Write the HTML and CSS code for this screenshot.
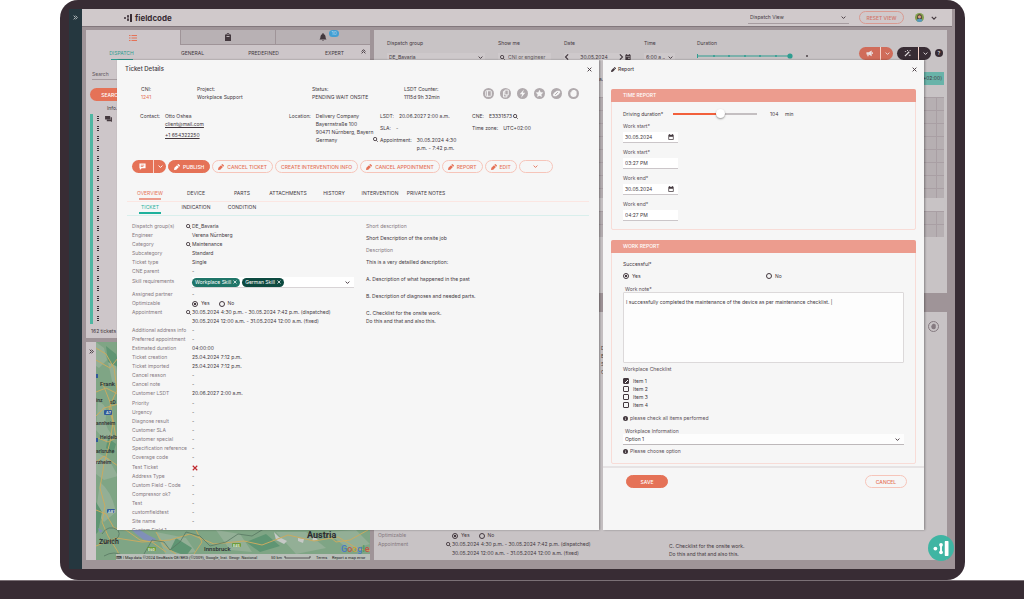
FILE: index.html
```html
<!DOCTYPE html>
<html lang="en">
<head>
<meta charset="utf-8">
<title>fieldcode – Ticket Details</title>
<link rel="stylesheet" href="styles.css">
</head>
<body>
<svg class="sprite" aria-hidden="true">
  <symbol id="pencil" viewBox="0 0 16 16"><path d="M0 16l1-6 7-7 5 5-7 7zM9 2l1.500-1.500q1-.8 2 0l3 3q.8 1 0 2L14 7z"/></symbol>
  <symbol id="lens" viewBox="0 0 16 16"><path fill="none" stroke="currentColor" stroke-width="2.800" d="M10.500 10.500L15 15M12 6.500a5.300 5.300 0 1 1-10.600 0 5.300 5.300 0 0 1 10.600 0z"/></symbol>
  <symbol id="chev" viewBox="0 0 16 16"><path fill="none" stroke="currentColor" stroke-width="3" d="M2 5l6 6 6-6"/></symbol>
  <symbol id="left" viewBox="0 0 16 16"><path fill="none" stroke="currentColor" stroke-width="3" d="M11 1L4 8l7 7"/></symbol>
  <symbol id="right" viewBox="0 0 16 16"><path fill="none" stroke="currentColor" stroke-width="3" d="M5 1l7 7-7 7"/></symbol>
  <symbol id="dbl" viewBox="0 0 16 16"><path fill="none" stroke="currentColor" stroke-width="3" d="M2 2l6 6-6 6M8 2l6 6-6 6"/></symbol>
  <symbol id="cross" viewBox="0 0 16 16"><path fill="none" stroke="currentColor" stroke-width="3" d="M2 2l12 12M14 2L2 14"/></symbol>
  <symbol id="cal" viewBox="0 0 16 16"><path fill-rule="evenodd" d="M1 2h2V0h2v2h6V0h2v2h2v13H1zM3 7v6h10V7z"/></symbol>
  <symbol id="calfull" viewBox="0 0 16 16"><path fill-rule="evenodd" d="M1 2h2V0h2v2h6V0h2v2h2v14H1zM3 6v1h10V6zM9 10v3h3v-3z"/></symbol>
  <symbol id="info" viewBox="0 0 16 16"><path fill-rule="evenodd" d="M8 0a8 8 0 1 1 0 16A8 8 0 0 1 8 0zM7 3v2h2V3zM7 7v6h2V7z"/></symbol>
  <symbol id="logo" viewBox="0 0 24 24"><circle cx="3" cy="12" r="3"/><circle cx="12" cy="6" r="3"/><circle cx="12" cy="18" r="3"/><path d="M10.500 6h3v12h-3zM18 2a3 3 0 0 1 6 0v20a3 3 0 0 1-6 0z"/></symbol>
  <symbol id="hand" viewBox="0 0 16 16"><path d="M4 9V6h1.500V4H7V3h3v1h1.500v1H12v5q-.5 3-4 3t-4-4z"/></symbol>
</svg>

<div class="laptop">
  <div class="screen">
    <nav class="rail" aria-label="Main"><button class="bare" aria-label="Expand menu"><svg class="i5"><use href="#dbl"/></svg></button></nav>
    <div class="app">
      <header class="bar">
        <div class="brand"><svg class="i8"><use href="#logo"/></svg>fieldcode</div>
        <label class="view"><select aria-label="View"><option>Dispatch View</option></select><svg class="i5"><use href="#chev"/></svg></label>
        <button class="btn reset">RESET VIEW</button>
        <svg class="avatar" viewBox="0 0 20 20"><circle cx="10" cy="10" r="10" fill="#83a04e"/><path d="M5 9q0-6 5-6t5 6v5H5z" fill="#4b3630"/><circle cx="10" cy="8.500" r="3.500" fill="#d9a286"/><path d="M3 17q2-5 7-5t7 5q-7 6-14 0z" fill="#5699bd"/></svg>
        <svg class="i6"><use href="#chev"/></svg>
      </header>

      <div class="cols">
        <div class="side">
          <section class="panel queue">
            <div class="icontabs">
              <button class="on" aria-label="Tickets"><svg viewBox="0 0 16 14"><path fill="none" stroke="currentColor" stroke-width="2" d="M0 2h3M5 2h11M0 7h3M5 7h11M0 12h3M5 12h11"/></svg></button>
              <button aria-label="Clipboard"><svg viewBox="0 0 16 16"><path fill-rule="evenodd" d="M2 3h3q0-3 3-3t3 3h3v13H2zM5 6v2h6V6zM7 2v2h2V2z"/></svg></button>
              <button aria-label="Alerts"><svg viewBox="0 0 16 16"><path d="M1 13q2-2 2-6 0-4 4-5V0h2v2q4 1 4 5 0 4 2 6zM6 14h4q-2 3-4 0z"/></svg><span class="count">10</span></button>
            </div>
            <div class="subtabs"><button class="on">DISPATCH</button><button>GENERAL</button><button>PREDEFINED</button><button>EXPERT</button><svg class="i5 up"><use href="#dbl"/></svg></div>
            <input class="search" placeholder="Search" aria-label="Search">
            <button class="btn full searchbtn">SEARCH</button>
            <div class="infohead">Info.</div>
            <ul class="rows">
              <li><svg class="chat" viewBox="0 0 16 14"><path d="M0 0h12v8H0zM4 9h9V3h3v11l-3-2H4z"/></svg></li><li></li><li></li><li></li><li></li><li></li><li></li><li></li><li></li><li></li><li></li><li></li><li></li><li></li><li></li><li></li><li></li><li></li><li></li><li></li><li></li>
            </ul>
            <div class="total">162 tickets</div>
          </section>
          <section class="mapbox">
            <button class="bare strip" aria-label="Expand map"><svg class="i5"><use href="#dbl"/></svg></button>
            <svg class="map" viewBox="0 0 274 218" preserveAspectRatio="xMinYMax slice">
              <rect width="274" height="218" fill="#7fa585"/>
              <g fill="#93af96"><path d="M0 0l8 6 3 12-8 8-3-2zM12 20l8 4 4 20-8-5zM2 60q10 2 8 14t8 20l-8 6-10-12zM0 110l12 6 10 18-14 4-8-6zM4 140q12 10 16 30l-12 10-8-10z"/><path d="M60 190l30 6 10 14-30 4zM120 188l24 4 12 18-22-2zM180 190l30 0 20 16-30 6zM230 190l30-2 14 14-20 6z"/></g>
              <g fill="#5f9573"><path d="M10 4l10 8 4 14-12-6zM0 160l6 10-4 20-2 2zM80 196l16 10-6 8-16-6zM150 200l20-8 14 12-20 6zM12 96l8 6-3 10-7-6z"/></g>
              <path fill="#8090b8" d="M34 186l10 2 8 5 8 4-2 3-10-2-8-6zM2 186l5 3-3 2z"/>
              <path fill="#c6c9c6" d="M178 190l5 5 8 4-3 3-8-4zM202 196l6 1-1 4-5-2zM218 194l4 4-6 1z"/>
              <g fill="none" stroke="#c9ab61" stroke-width="1"><path d="M0 6l10 6 8 14 3 22-8 18 4 14-3 20-6 22-4 24 5 18-3 16 6 14 10 16 4 18"/><path d="M0 50l10-4 12 6M0 74l8-8 14-4M2 96l10 4 10-5M0 120l8-6 14 10M6 40l8 20 6 36M0 18l14 8 8-10M0 168l10 4 8 14 12 2 14 10 12 2 14 10M0 204l20-8 26 4 28-2 20-6 24 10 30-3 18 4 26-10 26 6 24-4 20 12 22 3M60 190l8 14 12 8M100 188l6 12-8 12M228 190l12 10 14-2 18-10"/></g>
              <g fill="none" stroke="#587762" stroke-width=".8"><path d="M6 192q6-10 16-4 4 8-6 10-8 6-12-2M48 212l8-14 12 2 6 8 10-8 6-10 14 4 10 10 16-4 12-8 14 2 20-12 16 4M8 214q10-6 20 0t20 0"/></g>
              <g class="ml"><text x="4" y="44" class="m6">Frank</text><text x="0" y="60">inz</text><text x="14" y="62">sD</text><text x="0" y="83">annheim</text><text x="4" y="97">Heidelb</text><text x="0" y="111">arlsruhe</text><text x="0" y="122">rzheim</text><text x="3" y="202" class="m7">Zürich</text><text x="108" y="209" class="m6">Innsbruck</text><text x="211" y="196" class="m8">Austria</text></g>
              <g fill="#31599a"><rect x="8" y="68" width="8" height="5" rx="1"/><rect x="11" y="167" width="8" height="4" rx="1"/><rect y="32" width="2" height="4"/><rect y="96" width="2" height="4"/></g>
              <g fill="#6c9c3c"><rect x="51" y="205" width="9" height="4" rx="1"/><rect x="136" y="201" width="9" height="4" rx="1"/></g>
              <g class="road"><text x="10" y="72">A7</text><text x="12" y="171">A81</text><text x="52" y="209">E60</text><text x="137" y="205">E45</text></g>
              <g class="goog"><text x="245" y="210"><tspan fill="#4b79c4">G</tspan><tspan fill="#c2554a">o</tspan><tspan fill="#c9a13e">o</tspan><tspan fill="#4b79c4">g</tspan><tspan fill="#4f9a5c">l</tspan><tspan fill="#c2554a">e</tspan></text></g>
              <path fill="#b9bfb9" d="M20 212h254v6H20z"/>
              <g class="attr"><text x="20" y="217">⌨ | Map data ©2024 GeoBasis-DE/BKG (©2009), Google, Inst. Geogr. Nacional</text><text x="175" y="217">50 km</text><text x="220" y="217">Terms</text><text x="236" y="217">Report a map error</text></g>
              <path fill="none" stroke="#3d3a3c" stroke-width=".8" d="M189 214v2h25v-2"/>
            </svg>
          </section>
        </div>

        <div class="work">
          <section class="panel board">
            <div class="filters">
              <label class="f wide">Dispatch group<span class="box"><input value="DE_Bavaria"><svg class="i5"><use href="#chev"/></svg></span></label>
              <label class="f mid">Show me<span class="box"><svg class="i5"><use href="#lens"/></svg><input placeholder="CNI or engineer"></span></label>
              <label class="f date">Date<span class="box"><svg class="i6"><use href="#left"/></svg><input value="30.05.2024"><svg class="i6"><use href="#right"/></svg><svg class="i6"><use href="#calfull"/></svg></span></label>
              <label class="f time">Time<span class="box"><input value="6:00 a ..."><svg class="i5"><use href="#chev"/></svg></span></label>
              <div class="f dur">Duration<svg viewBox="0 0 112 6"><path stroke="#2f9d90" d="M0 3h94M.5 1v4"/><g fill="#2f9d90"><circle cx="17" cy="3" r="1"/><circle cx="32" cy="3" r="1"/><circle cx="48" cy="3" r="1"/><circle cx="63" cy="3" r="1"/><circle cx="79" cy="3" r="1"/><circle cx="93" cy="3" r="2.600"/></g><circle cx="110" cy="3" r="1" fill="#4a4045"/></svg></div>
              <div class="acts">
                <span class="split coral"><button aria-label="Announce"><svg viewBox="0 0 16 16"><path d="M1 5h5l7-4v13L6 10v4H3v-4H1zM14 5h2v4h-2z"/></svg></button><button aria-label="More announce options"><svg class="i5"><use href="#chev"/></svg></button></span>
                <span class="split dark"><button aria-label="Auto plan"><svg viewBox="0 0 16 16"><path d="M1 13L11 3l2 2L3 15zM2 2h3v2H2zM11 11h4v2h-4zM7 0h2v2H7zM13 0h2v2h-2z"/></svg></button><button aria-label="More plan options"><svg class="i5"><use href="#chev"/></svg></button></span>
                <button class="help" aria-label="Help">?</button>
              </div>
            </div>
            <div class="zone"><span>a.m.</span><span class="utc">(UTC+02:00)</span></div>
            <div class="slots"><div class="grid tall"></div><div class="grid short"></div></div>
          </section>
          <section class="panel detail">
            <svg class="i11 stop"><use href="#hand"/></svg>
            <div class="peek"><span>D</span><span>B</span><span>S</span><span>C</span></div>
            <div class="foot">
              <dl>
                <dt>Optimizable</dt><dd><label class="opt"><input type="radio" name="o2" checked>Yes</label><label class="opt"><input type="radio" name="o2">No</label></dd>
                <dt>Appointment</dt><dd class="two"><svg class="i5"><use href="#lens"/></svg>30.05.2024 4:30 p.m. - 30.05.2024 7:42 p.m. (dispatched)<br>30.05.2024 12:00 a.m. - 31.05.2024 12:00 a.m. (fixed)</dd>
              </dl>
              <p>C. Checklist for the onsite work.<br>Do this and that and also this.</p>
            </div>
          </section>
        </div>
      </div>
    </div>

    <div class="overlay">
      <section class="dialog ticket" role="dialog" aria-label="Ticket Details">
        <header class="title"><h2>Ticket Details</h2><button class="bare" aria-label="Close ticket"><svg class="i5"><use href="#cross"/></svg></button></header>
        <div class="facts">
          <div>CNI:<br><a href="#" class="hot">1241</a></div>
          <div>Project:<br>Workplace Support</div>
          <div>Status:<br>PENDING WAIT ONSITE</div>
          <div>LSDT Counter:<br>1115d 9h 32min</div>
          <div class="badges">
            <svg viewBox="0 0 16 16"><rect x="4" y="4" width="8" height="8" rx="1"/><path d="M6.500 4v8"/></svg>
            <svg viewBox="0 0 16 16"><path d="M7 3h5v7H7zM7 5H5v8h5v-3"/></svg>
            <svg viewBox="0 0 16 16"><path fill="#f6f6f6" stroke="none" d="M10 2L4 9h3.500L6 14l6-7H8.500z"/></svg>
            <svg viewBox="0 0 16 16"><path fill="#f6f6f6" stroke="none" d="M8 2.500l1.700 3.600 3.900.5-2.900 2.700.8 3.900L8 11.300l-3.500 1.900.8-3.900L2.400 6.600l3.900-.5z"/></svg>
            <svg viewBox="0 0 16 16"><path fill="#f6f6f6" stroke="none" d="M2.500 10l2-3 4-3h4l1 2-2 3-4 3H4z"/><path stroke="#b0aaad" d="M6 10l4-4"/></svg>
            <svg viewBox="0 0 16 16"><path fill="#f6f6f6" stroke="none" d="M3.500 9V6H5V4h1.500V3h4v1H12v1h.5v5q-.5 3-4.500 3t-4.500-4z"/></svg>
          </div>
        </div>
        <div class="contact">
          <div class="pair"><span>Contact:</span><div class="links">Otto Oshea<br><a href="#">client@mail.com</a><a href="#" class="tel">+1 654322250</a></div></div>
          <div class="pair"><span>Location:</span><div>Delivery Company<br>Bayernstraße 100<br>90471 Nürnberg, Bayern<br>Germany</div></div>
          <div class="stack"><div class="pair ind"><span>LSDT:</span><div>20.06.2027 2:00 a.m.</div></div><div class="pair ind"><span>SLA:</span><div>-</div></div><div class="pair"><svg class="i5"><use href="#lens"/></svg><span>Appointment:</span><div>30.05.2024 4:30<br>p.m. - 7:42 p.m.</div></div></div>
          <div class="stack"><div class="pair"><span>CNE:</span><div>E3331573 <svg class="i5"><use href="#lens"/></svg></div></div><div class="pair"><span>Time zone:</span><div>UTC+02:00</div></div></div>
        </div>
        <div class="actions">
          <span class="split coral"><button aria-label="Comment"><svg viewBox="0 0 16 16"><path fill-rule="evenodd" d="M1 1h14v11H6l-4 4v-4H1zM4 4v1.500h8V4zM4 7.500V9h6V7.500z"/></svg></button><button aria-label="More comment options"><svg class="i5"><use href="#chev"/></svg></button></span>
          <button class="btn full"><svg class="i6"><use href="#pencil"/></svg>PUBLISH</button>
          <button class="btn"><svg class="i6"><use href="#pencil"/></svg>CANCEL TICKET</button>
          <button class="btn">CREATE INTERVENTION INFO</button>
          <button class="btn"><svg class="i6"><use href="#pencil"/></svg>CANCEL APPOINTMENT</button>
          <button class="btn"><svg class="i6"><use href="#pencil"/></svg>REPORT</button>
          <button class="btn"><svg class="i6"><use href="#pencil"/></svg>EDIT</button>
          <button class="btn more" aria-label="More actions"><svg class="i5"><use href="#chev"/></svg></button>
        </div>
        <div class="tabs main"><button class="on">OVERVIEW</button><button>DEVICE</button><button>PARTS</button><button>ATTACHMENTS</button><button>HISTORY</button><button>INTERVENTION</button><button>PRIVATE NOTES</button></div>
        <div class="tabs sub"><button class="on">TICKET</button><button>INDICATION</button><button>CONDITION</button></div>
        <div class="body">
          <div class="fields">
            <dl>
              <dt>Dispatch group(s)</dt><dd><svg class="i5"><use href="#lens"/></svg>DE_Bavaria</dd>
              <dt>Engineer</dt><dd>Verena Nürnberg</dd>
              <dt>Category</dt><dd><svg class="i5"><use href="#lens"/></svg>Maintenance</dd>
              <dt>Subcategory</dt><dd>Standard</dd>
              <dt>Ticket type</dt><dd>Single</dd>
              <dt>CNE parent</dt><dd>-</dd>
            </dl>
            <dl class="skills">
              <dt>Skill requirements</dt><dd class="picker"><span class="chip">Workplace Skill <svg><use href="#cross"/></svg></span><span class="chip deep">German Skill <svg><use href="#cross"/></svg></span><svg class="i5 end"><use href="#chev"/></svg></dd>
            </dl>
            <dl>
              <dt>Assigned partner</dt><dd>-</dd>
              <dt>Optimizable</dt><dd><label class="opt"><input type="radio" name="o1" checked>Yes</label><label class="opt"><input type="radio" name="o1">No</label></dd>
              <dt>Appointment</dt><dd class="two"><svg class="i5"><use href="#lens"/></svg>30.05.2024 4:30 p.m. - 30.05.2024 7:42 p.m. (dispatched)<br>30.05.2024 12:00 a.m. - 31.05.2024 12:00 a.m. (fixed)</dd>
              <dt>Additional address info</dt><dd>-</dd>
              <dt>Preferred appointment</dt><dd>-</dd>
              <dt>Estimated duration</dt><dd>04:00:00</dd>
              <dt>Ticket creation</dt><dd>25.04.2024 7:12 p.m.</dd>
              <dt>Ticket imported</dt><dd>25.04.2024 7:12 p.m.</dd>
              <dt>Cancel reason</dt><dd>-</dd>
              <dt>Cancel note</dt><dd>-</dd>
              <dt>Customer LSDT</dt><dd>20.06.2027 2:00 a.m.</dd>
            </dl>
            <dl>
              <dt>Priority</dt><dd>-</dd>
              <dt>Urgency</dt><dd>-</dd>
              <dt>Diagnose result</dt><dd>-</dd>
              <dt>Customer SLA</dt><dd>-</dd>
              <dt>Customer special</dt><dd>-</dd>
              <dt>Specification reference</dt><dd>-</dd>
              <dt>Coverage code</dt><dd>-</dd>
            </dl>
            <dl>
              <dt>Test Ticket</dt><dd class="no"><svg aria-label="No"><use href="#cross"/></svg></dd>
              <dt>Address Type</dt><dd>-</dd>
              <dt>Custom Field - Code</dt><dd>-</dd>
              <dt>Compressor ok?</dt><dd>-</dd>
              <dt>Test</dt><dd>-</dd>
              <dt>customfieldtest</dt><dd>-</dd>
              <dt>Site name</dt><dd>-</dd>
              <dt>Custom Field 1</dt><dd>-</dd>
            </dl>
          </div>
          <div class="desc">
            <h3>Short description</h3>
            <p>Short Description of the onsite job</p>
            <h3>Description</h3>
            <p>This is a very detailled description:</p>
            <p>A. Description of what happened in the past</p>
            <p>B. Description of diagnoses and needed parts.</p>
            <p>C. Checklist for the onsite work.<br>Do this and that and also this.</p>
          </div>
        </div>
      </section>

      <form class="dialog report" aria-label="Report">
        <header class="title"><h2><svg class="i5"><use href="#pencil"/></svg>Report</h2><button type="button" class="bare" aria-label="Close report"><svg class="i5"><use href="#cross"/></svg></button></header>
        <section class="card">
          <h3>TIME REPORT</h3>
          <div class="inner">
            <div class="drive"><label for="drv">Driving duration*</label><input id="drv" type="range" min="0" max="180" value="104"><output for="drv">104</output><span>min</span></div>
            <label class="stamp">Work start*<span><input value="30.05.2024"><svg class="i6"><use href="#cal"/></svg></span></label>
            <label class="stamp">Work start*<span><input value="03:27 PM"></span></label>
            <label class="stamp">Work end*<span><input value="30.05.2024"><svg class="i6"><use href="#cal"/></svg></span></label>
            <label class="stamp">Work end*<span><input value="04:27 PM"></span></label>
          </div>
        </section>
        <section class="card">
          <h3>WORK REPORT</h3>
          <div class="inner">
            <div class="strong">Successful*</div>
            <div class="yesno"><label class="opt"><input type="radio" name="ok" checked>Yes</label><label class="opt"><input type="radio" name="ok">No</label></div>
            <label class="note" for="note">Work note*</label>
            <textarea id="note">I successfully completed the maintenance of the device as per maintenance checklist. |</textarea>
            <fieldset><legend>Workplace Checklist</legend>
              <label><input type="checkbox" checked>Item 1</label><label><input type="checkbox">Item 2</label><label><input type="checkbox">Item 3</label><label><input type="checkbox">Item 4</label>
            </fieldset>
            <p class="hint"><svg class="i5"><use href="#info"/></svg>please check all items performed</p>
            <label class="note" for="wi">Workplace Information</label>
            <div class="select"><select id="wi"><option>Option 1</option></select><svg class="i5"><use href="#chev"/></svg></div>
            <p class="hint"><svg class="i5"><use href="#info"/></svg>Please choose option</p>
          </div>
        </section>
        <footer><button type="button" class="btn full">SAVE</button><button type="button" class="btn">CANCEL</button></footer>
      </form>
    </div>
    <button class="fab" aria-label="Open assistant"><svg><use href="#logo"/></svg></button>
  </div>
</div>
<div class="base"></div>
</body>
</html>
```

FILE: styles.css
```css
* { box-sizing: border-box; margin: 0; padding: 0; }
:root {
  --ink: #43383e;
  --soft: #85797f;
  --coral: #e57257;
  --teal: #3fb5a3;
  --shell: #382c34;
}
body { min-height: 100vh; display: flex; flex-direction: column; background: #fff; color: var(--ink); font: 5px/8px Inter, "Open Sans", sans-serif; overflow: hidden; }
button, input, select, textarea { font: inherit; color: inherit; border: 0; background: none; min-width: 0; }
input::placeholder { color: inherit; opacity: .8; }
input, select, textarea { outline: 0; appearance: none; }
a { color: inherit; }
ul { list-style: none; }
svg { fill: currentColor; flex: none; }
.sprite { position: absolute; width: 0; height: 0; }
.i5 { width: 5px; height: 5px; }
.i6 { width: 6px; height: 6px; }
.i8 { width: 8px; height: 8px; }
.i11 { width: 11px; height: 11px; }
.bare { display: flex; align-items: center; justify-content: center; }

.laptop { flex: 1; margin: 0 59px 0 60px; padding: 9px 10px 11px 9px; background: var(--shell); border-radius: 18px; display: flex; }
.base { height: 19px; background: var(--shell); border-top: 1px solid #7b7177; }
.screen { position: relative; flex: 1; display: flex; background: #9f9498; }
.rail { width: 13px; padding-top: 6px; background: #25373f; color: #b9bec0; display: flex; justify-content: center; align-items: flex-start; }
.app { flex: 1; display: flex; flex-direction: column; min-width: 0; }

.bar { height: 18px; margin-right: 3px; padding: 0 15px 0 42px; background: #d0c9cb; border-bottom: 1px solid #82777c; display: flex; align-items: center; }
.brand { display: flex; align-items: center; gap: 3px; font: 700 8px/10px Inter, sans-serif; color: #382c34; margin-right: auto; }
.view { display: flex; align-items: center; width: 101px; height: 12px; padding: 0 3px 0 2px; border-bottom: 1px solid #a69ca0; margin-right: 10px; }
.view select { flex: 1; }
.btn { display: flex; align-items: center; justify-content: center; gap: 3px; height: 13px; padding: 0 5px; border: 1px solid #f6c5ba; border-radius: 7px; color: var(--coral); font-weight: 500; white-space: nowrap; }
.btn.full { background: var(--coral); border-color: var(--coral); color: #fff; }
.reset { width: 45px; border-color: #d99a91; color: #d2756a; margin-right: 11px; }
.avatar { width: 9px; height: 9px; margin-right: 7px; }

.cols { flex: 1; display: flex; gap: 4px; padding: 3px 8px 9px 4px; }
.side { width: 284px; display: flex; flex-direction: column; gap: 4px; }
.panel { background: #c8c3c5; }
.queue { height: 308px; background: #cdc6c9; display: flex; flex-direction: column; }
.icontabs { display: flex; height: 16px; }
.icontabs button { flex: 1; display: flex; align-items: center; justify-content: center; background: #b8b1b4; border-left: 1px solid #9f9498; border-bottom: 1px solid #9f9498; }
.icontabs .on { background: none; border: 0; color: var(--coral); }
.icontabs svg { width: 8px; height: 8px; }
.count { width: 10px; height: 7px; margin: -8px -12px 0 2px; border-radius: 4px; background: #439fd3; color: #b9dcee; line-height: 7px; }
.subtabs { height: 16px; display: flex; align-items: center; }
.subtabs button { flex: 1; height: 14px; }
.subtabs .on { color: #2f9d90; background: linear-gradient(#2f9d90, #2f9d90) center bottom / 22px 1px no-repeat; }
.up { transform: rotate(-90deg); margin: 0 4px 4px -9px; }
.search { height: 12px; margin: 8px 6px; border-bottom: 1px solid #a69ca0; }
.searchbtn { width: 43px; margin-left: 4px; color: #eadfe0; background: #d06c5a; border: 0; }
.infohead { padding: 4px 0 2px 21px; line-height: 7px; }
.rows { border-left: 3px solid #4fb6a2; margin-left: 4px; }
.rows li { height: 10px; padding-left: 4px; display: flex; align-items: center; gap: 6px; }
.rows li::before { content: ""; width: 2px; height: 5px; background: repeating-linear-gradient(#382c34 0 1px, transparent 1px 2px); }
.chat { width: 7px; height: 6px; }
.total { margin-left: 5px; line-height: 14px; }
.mapbox { flex: 1; display: flex; min-height: 0; background: #cdc6c9; }
.strip { width: 10px; align-items: flex-start; padding-top: 7px; }
.map { flex: 1; min-width: 0; height: 100%; }
.ml { font: 500 5px Roboto, sans-serif; fill: #2c2b30; }
.m6 { font-size: 6px; }
.m7 { font-size: 7px; }
.m8 { font-size: 9px; font-weight: 700; }
.road { font: 700 4px Roboto, sans-serif; fill: #dfe6dc; }
.goog { font: 500 9px Roboto, sans-serif; }
.attr { font: 4px Roboto, sans-serif; fill: #222; }

.work { flex: 1; min-width: 0; display: flex; flex-direction: column; gap: 19px; }
.board { height: 263px; }
.filters { display: flex; padding: 9px 4px 0 13px; height: 30px; }
.f { display: flex; flex-direction: column; gap: 6px; margin-right: 13px; }
.box { display: flex; align-items: center; gap: 3px; height: 9px; padding: 0 2px; background: #cec9cb; }
.box input { flex: 1; width: 10px; }
.wide { width: 98px; }
.mid { width: 53px; }
.date { width: 67px; }
.date input { text-align: center; }
.date .box { padding: 0; gap: 1px; }
.time { width: 31px; margin-right: 22px; }
.dur svg { width: 112px; height: 6px; }
.acts { margin: 8px 0 0 auto; display: flex; gap: 4px; align-items: flex-start; }
.split { display: flex; width: 34px; height: 13px; border-radius: 7px; overflow: hidden; color: #fff; background: var(--coral); }
.split button { display: flex; align-items: center; justify-content: center; width: 12px; }
.split button:first-child { flex: 1; border-right: 1px solid #f8d3ca; }
.split button:first-child svg { width: 7px; height: 7px; }
.split.dark { background: #382c34; color: #e2dcde; }
.acts .coral { background: #d06c5a; color: #eadfe0; }
.help { width: 8px; height: 8px; margin-top: 2px; border-radius: 4px; background: #382c34; color: #d0c9cb; font-weight: 700; }
.zone { margin: 12px 3px 0 225px; height: 13px; display: flex; justify-content: space-between; align-items: center; }
.utc { padding: 2px 2px 3px 40px; background: #69b3a9; }
.slots { margin: 12px 3px 0; display: flex; flex-direction: column; gap: 13px; }
.grid { background: repeating-linear-gradient(90deg, #a99fa4 0 1px, transparent 1px 13px), repeating-linear-gradient(#a99fa4 0 1px, #b6afb2 1px 13px); }
.tall { height: 101px; }
.short { height: 26px; }
.detail { flex: 1; display: flex; flex-direction: column; }
.stop { align-self: flex-end; margin: 9px 8px 12px; color: #857a80; border: 1px solid; border-radius: 6px; }
.peek { padding-left: 227px; display: flex; flex-direction: column; }
.foot { margin-top: auto; padding: 0 4px 2px; display: grid; grid-template-columns: 291px 1fr; align-items: end; }
.foot dl { grid-template-columns: 74px 1fr; }

.overlay { position: absolute; inset: 51px 31px 39px 48px; display: flex; gap: 4px; }
.dialog { background: #f6f6f6; overflow: hidden; min-width: 0; box-shadow: 1px 0 2px #0005; }
.ticket { flex: 482; }
.report { flex: 321; display: flex; flex-direction: column; }
.title { display: flex; justify-content: space-between; align-items: center; height: 18px; padding: 0 7px 0 8px; }
.title h2 { display: flex; align-items: center; gap: 2px; font: 500 6px/8px Inter, sans-serif; }
.report h2 { font-size: 5px; }
.facts { display: grid; grid-template-columns: 56px 115px 92px 79px 1fr; padding: 7px 14px 0 24px; }
.hot { color: var(--coral); text-decoration: none; }
.badges { display: flex; gap: 6px; align-self: center; }
.badges svg { width: 11px; height: 11px; border-radius: 6px; background: #b0aaad; fill: none; stroke: #f6f6f6; stroke-width: 1.4; }
.contact { display: grid; grid-template-columns: 149px 84px 99px 1fr; padding: 11px 0 0 23px; height: 58px; }
.pair { display: flex; gap: 5px; white-space: nowrap; }
.pair > svg { margin: 1px -3px 0 0; }
.pair div svg { vertical-align: -1px; }
.ind { padding-left: 7px; }
.links a { display: block; }
.tel { margin-top: 3px; }
.stack { display: flex; flex-direction: column; gap: 4px; }
.actions { display: flex; gap: 2px; padding: 0 0 0 15px; margin-top: 1px; }
.actions .more { width: 34px; }
.tabs { display: flex; margin: 0 10px; border-bottom: 1px solid #fbe6e2; }
.tabs button { width: 46px; display: flex; justify-content: center; white-space: nowrap; }
.main { margin-top: 15px; }
.main button, .sub button { padding: 1px 0 3px; border-bottom: 1px solid transparent; }
.main .on { color: var(--coral); background: linear-gradient(#ec9c8e, #ec9c8e) center bottom / 22px 2px no-repeat; }
.sub { border-color: #d9efec; }
.sub .on { color: #1fb19c; background: linear-gradient(#1fb19c, #1fb19c) center bottom / 22px 2px no-repeat; }
.body { display: grid; grid-template-columns: 222px 1fr; gap: 12px; padding: 6px 0 0 15px; }
dl { display: grid; grid-template-columns: 60px 1fr; line-height: 9px; }
dt { color: var(--soft); white-space: nowrap; }
dd { display: flex; align-items: center; white-space: nowrap; }
dd > .i5:first-child { margin: 0 1px 0 -6px; }
.two { display: block; line-height: 9px; }
.two svg { vertical-align: -1px; }
.fields dl + dl { margin-top: 1px; }
.skills { padding-bottom: 1px; }
.picker { height: 11px; padding: 0 4px 0 0; background: #fff; border-bottom: 1px solid #d8d4d6; gap: 2px; }
.chip { display: flex; align-items: center; gap: 2px; height: 9px; padding: 0 3px; border-radius: 5px; background: #1f7568; color: #fff; }
.chip svg { width: 4px; height: 4px; }
.deep { background: #0d4a40; }
dd > .end { margin-left: auto; }
.no svg { width: 6px; height: 6px; color: #c0272d; }
.opt { display: flex; align-items: center; gap: 3px; margin-right: 9px; }
[type=radio] { width: 6px; height: 6px; border: 1px solid var(--ink); border-radius: 3px; }
[type=radio]:checked { background: radial-gradient(var(--ink) 45%, transparent 55%); }
.desc h3 { font: inherit; color: var(--soft); margin-bottom: 4px; }
.desc p + h3 { margin-top: 4px; }
.desc p + p { margin-top: 9px; }

.card { margin: 0 8px 10px; border: 1px solid #f8dcd7; border-radius: 2px; }
.card h3 { height: 13px; margin: -1px; padding-left: 12px; font: 500 5px/13px Inter, sans-serif; color: #fff; background: #ec9c8e; border-radius: 2px 2px 0 0; }
.report .title + .card { margin-top: 11px; }
.inner { padding: 8px 11px; color: #5b5056; }
.drive { display: flex; align-items: center; height: 9px; color: var(--ink); }
.drive label { width: 50px; }
[type=range] { width: 84px; height: 9px; margin-right: 13px; background: linear-gradient(90deg, #f2603c 58%, #c4bfc1 58%) center / 100% 2px no-repeat; }
[type=range]::-webkit-slider-thumb { appearance: none; width: 9px; height: 9px; border-radius: 5px; background: #fff; box-shadow: 0 1px 2px #0006; }
output { width: 15px; }
.stamp { display: block; margin-top: 4px; }
.stamp + .stamp { margin-top: 5px; }
.stamp span { display: flex; align-items: center; width: 55px; height: 11px; margin-top: 2px; padding: 0 4px 0 2px; background: #fff; border-bottom: 1px solid #cbc6c9; color: var(--ink); }
.stamp input { flex: 1; width: 20px; }
.strong { color: var(--ink); }
.yesno { display: grid; grid-template-columns: 143px 1fr; margin: 4px 0 6px; color: var(--ink); }
.note { display: block; padding-left: 2px; line-height: 6px; }
textarea { display: block; width: 100%; height: 71px; padding: 5px 2px; border: 1px solid #dcd9da; border-radius: 1px; background: #fdfdfd; color: var(--ink); resize: none; }
fieldset { border: 0; margin-top: 2px; }
legend { margin-bottom: 4px; }
fieldset label { display: flex; align-items: center; gap: 4px; line-height: 8px; color: var(--ink); }
[type=checkbox] { width: 6px; height: 6px; border: 1px solid var(--ink); border-radius: 1px; }
[type=checkbox]:checked { background: linear-gradient(-45deg, transparent 40%, #fff 40% 55%, transparent 55%) center / 3px 3px no-repeat var(--ink); }
.hint { display: flex; align-items: center; gap: 2px; margin: 5px 0 6px; }
.hint svg { color: var(--ink); }
.select { display: flex; align-items: center; height: 11px; margin-bottom: 2px; padding: 0 4px 0 2px; background: #fdfdfd; border-bottom: 1px solid #bdb8ba; color: var(--ink); }
.select select { flex: 1; }
.select + .hint { margin: 2px 0 0; }
.report footer { display: flex; justify-content: space-between; border-top: 2px solid #e6e3e4; padding: 7px 17px 0 23px; margin-top: -8px; }
.report footer .btn { width: 42px; }
.fab { position: absolute; right: 1px; bottom: 8px; width: 26px; height: 26px; display: flex; align-items: center; justify-content: center; border-radius: 13px; background: var(--teal); color: #fff; }
.fab svg { width: 18px; height: 15px; }
```
